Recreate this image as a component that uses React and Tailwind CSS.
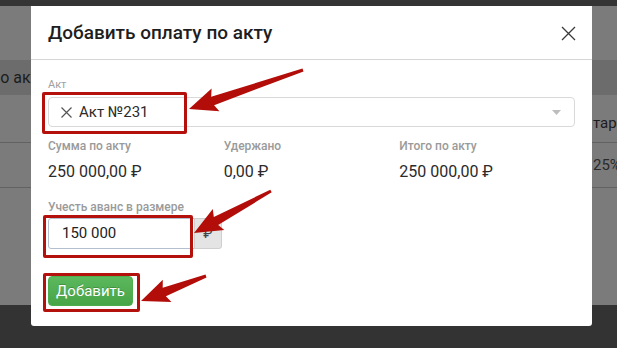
import React from "react";

const font = { fontFamily: "Roboto, 'Liberation Sans', sans-serif" };

// thick red annotation arrow: tail -> tip
const arrowPoints = ([x1, y1], [x2, y2], head = 25, halfHead = 12, tailW = 1.5, neckW = 4.5) => {
  const dx = x2 - x1
  const dy = y2 - y1
  const len = Math.hypot(dx, dy)
  const ux = dx / len
  const uy = dy / len
  const nx = -uy
  const ny = ux
  const bx = x2 - ux * head
  const by = y2 - uy * head
  const p = (x, y) => `${x.toFixed(1)},${y.toFixed(1)}`
  return [
    p(x1 + nx * tailW, y1 + ny * tailW),
    p(bx + nx * neckW, by + ny * neckW),
    p(bx + nx * halfHead - ux * 3, by + ny * halfHead - uy * 3),
    p(x2, y2),
    p(bx - nx * halfHead - ux * 3, by - ny * halfHead - uy * 3),
    p(bx - nx * neckW, by - ny * neckW),
    p(x1 - nx * tailW, y1 - ny * tailW),
  ].join(" ")
}

const arrows = [
  [[303, 70], [189, 109]],
  [[271, 191], [194, 233]],
  [[206, 276], [141, 301]],
]

const Field = ({ label, value }) => (
  <div className="flex flex-col">
    <span className="text-[12px] leading-[14px] font-medium text-[#9a9a9a]">{label}</span>
    <span className="mt-[9px] text-[16px] leading-[20px] text-[#2b2b2b]">{value}</span>
  </div>
)

const App = () => {
  return (
    <div className="relative w-[617px] h-[348px] overflow-hidden flex flex-col bg-[#7b7b7b]" style={font}>
      {/* page behind the overlay */}
      <div className="h-[6px] bg-[#343434]" />
      <div className="flex-1 flex flex-col">
        <div className="h-[54px]" />
        <div className="h-[35px] bg-[#6c6c6c] flex items-center whitespace-nowrap">
          <span className="-ml-[9px] text-[16px] text-[#1c1c1c]">по акту</span>
        </div>
        <div className="h-[48px] border-b border-[#626262] flex items-end pb-[8px] pl-[593px] whitespace-nowrap">
          <span className="text-[15px] text-[#1c1c1c]">тарии</span>
        </div>
        <div className="h-[45px] border-b border-[#626262] flex items-center pl-[593px] whitespace-nowrap">
          <span className="text-[15px] text-[#2a2a2a]">25%</span>
        </div>
      </div>
      <div className="h-[43px] bg-[#333333]" />

      {/* modal */}
      <div className="absolute left-[31px] top-[6px] w-[561px] h-[320px] bg-white rounded-b-[3px] flex flex-col">
        <div className="h-[54px] px-[17px] flex items-center justify-between border-b border-[#d6d6d6]">
          <h2 className="text-[19px] font-medium text-[#1e1e1e] mt-[1px]">Добавить оплату по акту</h2>
          <svg width="15" height="15" viewBox="0 0 15 15" className="mr-[-1px] mt-[1px]">
            <path d="M1 1L14 14M14 1L1 14" stroke="#3a3a3a" strokeWidth="1.3" />
          </svg>
        </div>

        <div className="px-[17px] pt-[18px] flex flex-col">
          <span className="text-[11px] leading-[14px] text-[#a0a0a0]">Акт</span>
          <div className="mt-[5px] h-[30px] border border-[#d9d9d9] rounded-[4px] flex items-center justify-between pl-[12px] pr-[13px]">
            <div className="flex items-center gap-[7px]">
              <svg width="11" height="11" viewBox="0 0 11 11">
                <path d="M0.5 0.5L10.5 10.5M10.5 0.5L0.5 10.5" stroke="#555" strokeWidth="1.2" />
              </svg>
              <span className="text-[15px] text-[#2b2b2b]">Акт №231</span>
            </div>
            <svg width="9" height="5" viewBox="0 0 9 5">
              <path d="M0 0H9L4.5 5Z" fill="#bdbdbd" />
            </svg>
          </div>

          <div className="mt-[12px] grid grid-cols-3">
            <Field label="Сумма по акту" value="250 000,00 ₽" />
            <Field label="Удержано" value="0,00 ₽" />
            <Field label="Итого по акту" value="250 000,00 ₽" />
          </div>

          <span className="mt-[18px] text-[12px] leading-[14px] font-medium text-[#9a9a9a]">Учесть аванс в размере</span>
          <div className="mt-[4px] flex h-[31px]">
            <div className="w-[147px] border border-[#b3bfcf] rounded-l-[3px] flex items-center pl-[13px]">
              <span className="text-[15px] text-[#222]">150 000</span>
            </div>
            <div className="w-[28px] -ml-px bg-[#e4e4e4] border border-[#cfcfcf] rounded-r-[3px] flex items-center justify-center">
              <span className="text-[14px] text-[#444]">₽</span>
            </div>
          </div>

          <button className="mt-[27px] w-[85px] h-[30px] rounded-[4px] bg-gradient-to-b from-[#5cb85c] to-[#47a447] border border-[#4cae4c] text-white text-[15px] [text-shadow:0_-1px_0_rgba(0,0,0,0.2)]">
            Добавить
          </button>
        </div>
      </div>

      {/* annotations */}
      <div className="absolute left-[42px] top-[92px] w-[145px] h-[42px] border-[3px] border-[#b4100c] rounded-[2px]" />
      <div className="absolute left-[43px] top-[215px] w-[150px] h-[43px] border-[3px] border-[#b4100c] rounded-[2px]" />
      <div className="absolute left-[43px] top-[273px] w-[97px] h-[39px] border-[3px] border-[#b4100c] rounded-[2px]" />
      <svg className="absolute left-0 top-0" width="617" height="348">
        {arrows.map(([a, b], i) => (
          <polygon key={i} points={arrowPoints(a, b)} fill="#b30d0a" />
        ))}
      </svg>
    </div>
  )
}

export default App
